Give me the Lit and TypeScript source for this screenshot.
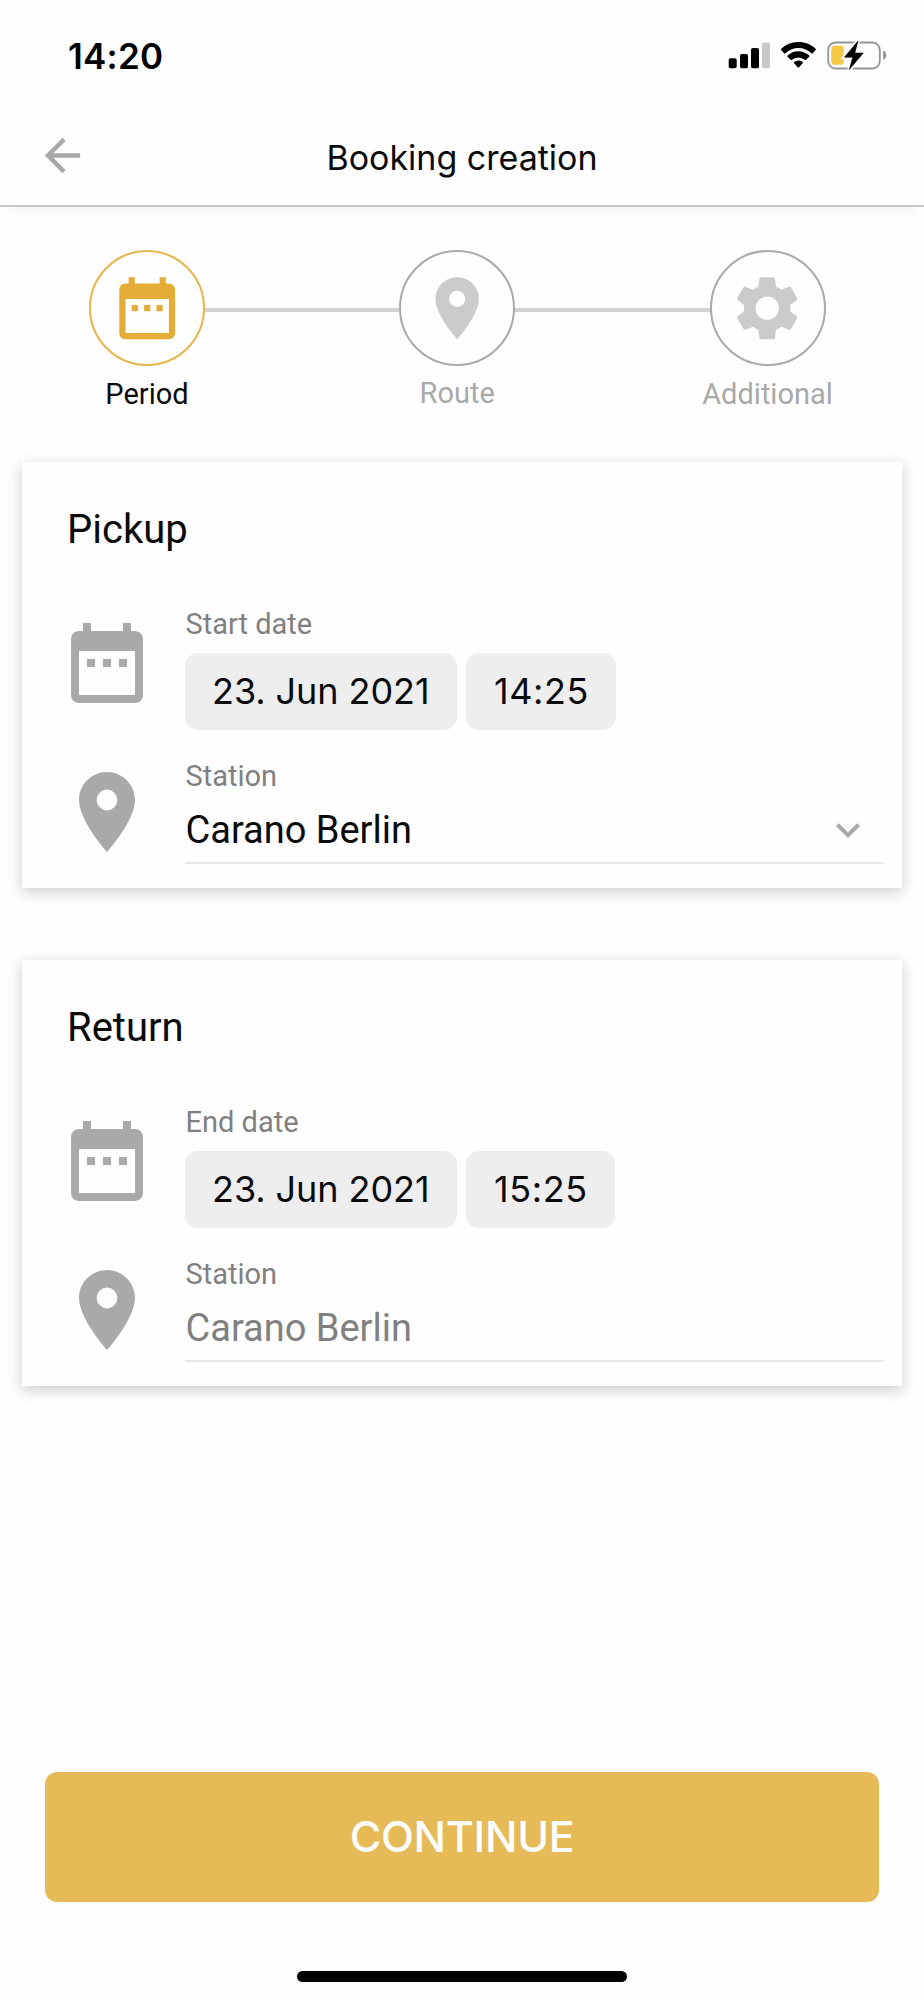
import { LitElement, html, css, svg } from "lit";
import { customElement, property } from "lit/decorators.js";

const CALENDAR = svg`<path d="M9 11H7v2h2v-2zm4 0h-2v2h2v-2zm4 0h-2v2h2v-2zm2-7h-1V2h-2v2H8V2H6v2H5c-1.11 0-1.99.9-1.99 2L3 20c0 1.1.89 2 2 2h14c1.1 0 2-.9 2-2V6c0-1.1-.9-2-2-2zm0 16H5V9h14v11z"/>`;
const PIN = svg`<path d="M12 2C8.13 2 5 5.13 5 9c0 5.25 7 13 7 13s7-7.75 7-13c0-3.87-3.13-7-7-7zm0 9.6a2.6 2.6 0 1 1 0-5.2 2.6 2.6 0 0 1 0 5.2z"/>`;
const GEAR = svg`<path d="M19.43 12.98c.04-.32.07-.64.07-.98s-.03-.66-.07-.98l2.11-1.65c.19-.15.24-.42.12-.64l-2-3.46c-.12-.22-.39-.3-.61-.22l-2.49 1c-.52-.4-1.08-.73-1.69-.98l-.38-2.65C14.46 2.18 14.25 2 14 2h-4c-.25 0-.46.18-.49.42l-.38 2.65c-.61.25-1.17.59-1.69.98l-2.49-1c-.23-.09-.49 0-.61.22l-2 3.46c-.13.22-.07.49.12.64l2.11 1.65c-.04.32-.07.65-.07.98s.03.66.07.98l-2.11 1.65c-.19.15-.24.42-.12.64l2 3.46c.12.22.39.3.61.22l2.49-1c.52.4 1.08.73 1.69.98l.38 2.65c.03.24.24.42.49.42h4c.25 0 .46-.18.49-.42l.38-2.65c.61-.25 1.17-.59 1.69-.98l2.49 1c.23.09.49 0 .61-.22l2-3.46c.12-.22.07-.49-.12-.64l-2.11-1.65zM12 15.75a3.75 3.75 0 1 1 0-7.5 3.75 3.75 0 0 1 0 7.5z"/>`;

@customElement("booking-card")
class BookingCard extends LitElement {
  @property() heading = "";
  @property() dateLabel = "";
  @property() date = "";
  @property() time = "";
  @property() station = "";
  @property({ type: Boolean }) locked = false;

  static styles = css`
    :host { display: block; box-sizing: border-box; height: 426px; padding: 43.5px 18px 0 37px; background: #fefefe; box-shadow: 0 4px 14px rgba(0, 0, 0, 0.2); }
    h2 { margin: 0 0 53.5px 8px; font: 400 40px/48px Roboto, sans-serif; color: #0a0a0a; }
    .row { display: grid; grid-template-columns: 96px 1fr; column-gap: 30px; }
    .row + .row { margin-top: 29px; }
    .icon { width: 96px; height: 96px; fill: #a9a9a9; margin-top: 8px; }
    .row + .row .icon { margin-top: 5px; }
    .label { padding-left: 0.5px; font: 400 29px/34px Roboto, sans-serif; color: #808080; }
    .chips { display: flex; gap: 9px; margin-top: 12px; }
    .chip { height: 77px; box-sizing: border-box; padding: 0 27.4px 0 27px; border-radius: 13px; background: #eee; font: 400 36px/77px Inter, sans-serif; letter-spacing: -0.07px; color: #0a0a0a; white-space: nowrap; }
    .time { padding: 0 27px 0 28px; letter-spacing: 0.6px; }
    .field { display: flex; justify-content: space-between; align-items: center; margin: 15px 0.5px 0 0; height: 44px; padding: 0 0 10px 0.5px; border-bottom: 2px solid #e6e6e6; font: 400 38px/44px Roboto, sans-serif; color: #0a0a0a; }
    .locked { color: #808080; }
    .chevron { width: 48px; height: 48px; margin: -1px 11.5px 0 0; fill: #a9a9a9; }
  `;

  render() {
    return html`
      <h2>${this.heading}</h2>
      <div class="row">
        <svg class="icon" viewBox="0 0 24 24">${CALENDAR}</svg>
        <div>
          <div class="label">${this.dateLabel}</div>
          <div class="chips"><div class="chip">${this.date}</div><div class="chip time">${this.time}</div></div>
        </div>
      </div>
      <div class="row">
        <svg class="icon" viewBox="0 0 24 24">${PIN}</svg>
        <div>
          <div class="label">Station</div>
          <div class="field ${this.locked ? "locked" : ""}">
            <span>${this.station}</span>
            ${this.locked ? "" : html`<svg class="chevron" viewBox="0 0 24 24"><path d="M16.59 8.59 12 13.17 7.41 8.59 6 10l6 6 6-6z"/></svg>`}
          </div>
        </div>
      </div>`;
  }
}

@customElement("app-root")
class AppRoot extends LitElement {
  static styles = css`
    :host { display: flex; flex-direction: column; height: 2000px; background: #fefefe; color: #0a0a0a; overflow: hidden; }
    .status { display: flex; justify-content: space-between; height: 112px; padding: 0 36px 0 68px; font: 600 35px/112px Inter, sans-serif; letter-spacing: 0.23px; color: #000; }
    .status svg { width: 162px; height: 36px; margin-top: 37px; }
    header { display: grid; grid-template-columns: 53px 1fr 53px; align-items: center; height: 93px; padding: 0 36px; border-bottom: 2px solid #c8c8c8; box-shadow: 0 14px 12px -8px rgba(0, 0, 0, 0.04); }
    header svg { width: 53px; height: 53px; fill: #a9a9a9; margin-top: -6px; }
    h1 { margin: -2px 0 0; text-align: center; font: 400 34px/44px Inter, sans-serif; }
    .steps { display: flex; padding: 43px 98.5px 0 89px; height: 212px; box-sizing: border-box; }
    .step { display: flex; flex-direction: column; align-items: center; width: 116px; font: 400 29px/34px Roboto, sans-serif; color: #a9a9a9; }
    .disc { display: grid; place-items: center; box-sizing: border-box; width: 116px; height: 116px; border: 2px solid #a9a9a9; border-radius: 50%; margin-bottom: 10px; }
    .step:first-child .disc, .step:last-child .disc { margin-bottom: 11px; }
    .disc svg { width: 74.4px; height: 74.4px; fill: #cbcbcb; }
    .active { color: #0a0a0a; }
    .active .disc { border-color: #e6b54a; }
    .active .disc svg { fill: #e5ad38; }
    .link { flex: 1; height: 4px; margin-top: 58px; background: #d2d2d2; }
    .cards { display: grid; gap: 72px; padding: 43px 22px 0; }
    button { display: block; height: 130px; margin: auto 45px 0; padding: 0 0 2px; border: 0; border-radius: 12px; background: #e5ba57; color: #fefefe; font: 500 43px/128px Inter, sans-serif; letter-spacing: -0.3px; }
    .home { width: 330px; height: 11px; margin: 69px auto 18px; border-radius: 6px; background: #000; flex: none; }
  `;

  render() {
    return html`
      <div class="status">
        <span>14:20</span>
        <svg viewBox="726 37 162 36">
          <rect x="728.7" y="58.3" width="8" height="10" rx="1.8"/>
          <rect x="740" y="54" width="8" height="14.3" rx="1.8"/>
          <rect x="751" y="48" width="8" height="20.3" rx="1.8"/>
          <rect x="762" y="42.5" width="8" height="25.8" rx="1.8" fill="#c9c9c9"/>
          <path d="M798.4 42c6.7 0 12.9 2.5 17.4 6.9l.1.9-3.4 3.6-.8 0a19.3 19.3 0 0 0-26.6 0l-.8 0-3.4-3.6.1-.9a25 25 0 0 1 17.4-6.9zM798.4 51.3c4.1 0 8 1.6 10.9 4.3l.1.9-3.5 3.6-.8 0a9.9 9.9 0 0 0-13.4 0l-.8 0-3.5-3.6.1-.9a15.9 15.9 0 0 1 10.9-4.3zM798.4 60.6c1.7 0 3.2.6 4.4 1.6l.1.9-4 4.3-1 0-4-4.3.1-.9a6.7 6.7 0 0 1 4.4-1.6z"/>
          <rect x="828.2" y="42.5" width="51.6" height="26" rx="7.5" fill="none" stroke="#959595" stroke-width="1.8"/>
          <path d="M883.3 50.5c1.8.8 2.8 2.6 2.8 4.7s-1 3.9-2.8 4.7z" fill="#8a8a8a"/>
          <path d="M834.5 45.7h6.5q3 0 3 3v3q-2.5 3.5 0 7v3q0 3-3 3h-6.5q-3.3 0-3.3-3.3v-12.4q0-3.3 3.3-3.3z" fill="#f5cb45"/>
          <path d="M858 41 844.5 57.2h8.3L849.3 69.5 863.3 53h-8.5z" stroke="#fefefe" stroke-width="4"/>
          <path d="M858 41 844.5 57.2h8.3L849.3 69.5 863.3 53h-8.5z" stroke="#000" stroke-width=".6" stroke-linejoin="round"/>
        </svg>
      </div>
      <header>
        <svg viewBox="0 0 24 24"><path d="M20 11H7.83l5.59-5.59L12 4l-8 8 8 8 1.41-1.41L7.83 13H20v-2z"/></svg>
        <h1>Booking creation</h1>
      </header>
      <div class="steps">
        <div class="step active"><div class="disc"><svg viewBox="0 0 24 24">${CALENDAR}</svg></div>Period</div>
        <div class="link"></div>
        <div class="step"><div class="disc"><svg viewBox="0 0 24 24">${PIN}</svg></div>Route</div>
        <div class="link"></div>
        <div class="step"><div class="disc"><svg viewBox="0 0 24 24">${GEAR}</svg></div>Additional</div>
      </div>
      <div class="cards">
        <booking-card heading="Pickup" dateLabel="Start date" date="23. Jun 2021" time="14:25" station="Carano Berlin"></booking-card>
        <booking-card heading="Return" dateLabel="End date" date="23. Jun 2021" time="15:25" station="Carano Berlin" locked></booking-card>
      </div>
      <button>CONTINUE</button>
      <div class="home"></div>`;
  }
}
